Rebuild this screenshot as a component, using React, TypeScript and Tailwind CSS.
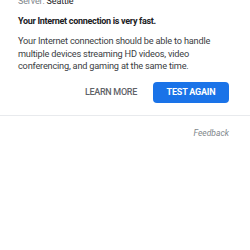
export default function App() {
  return (
    <div className="w-[250px] h-[250px] overflow-hidden bg-white" style={{ fontFamily: 'Roboto, "Liberation Sans", sans-serif' }}>
      <div className="mt-[-5px] pl-[18px] pr-[21px]">
        <div className="text-[9px] leading-[12px] text-[#80868b] tracking-[-0.15px]">
          Server: <span className="text-[#202124]">Seattle</span>
        </div>
        <div className="mt-[8px] text-[9px] leading-[12px] font-bold text-[#202124] tracking-[-0.3px]">
          Your Internet connection is very fast.
        </div>
        <div className="mt-[8px] text-[9.2px] leading-[12.5px] text-[#3c4043] tracking-[-0.2px]">
          Your Internet connection should be able to handle multiple devices streaming HD videos, video conferencing, and gaming at the same time.
        </div>
        <div className="mt-[9px] flex justify-end items-center gap-[16px]">
          <button className="text-[9px] leading-[12px] font-medium text-[#5f6368] tracking-[-0.3px]">LEARN MORE</button>
          <button className="w-[76px] h-[21px] rounded-[4px] bg-[#1a73e8] text-white text-[9px] leading-[12px] font-bold tracking-[-0.2px]">TEST AGAIN</button>
        </div>
      </div>
      <div className="mt-[12px] h-px bg-[#e8eaed]" />
      <div className="pr-[21px] mt-[11px] flex justify-end">
        <span className="text-[8.5px] leading-[12px] italic text-[#80868b]">Feedback</span>
      </div>
    </div>
  );
}
